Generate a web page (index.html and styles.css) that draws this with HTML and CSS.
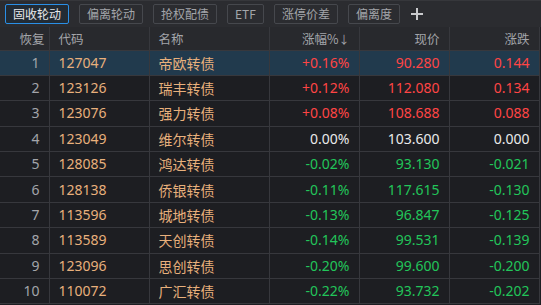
FILE: index.html
```html
<!DOCTYPE html>
<html lang="zh">
<head>
  <meta charset="UTF-8" />
  <title>固收轮动</title>
  <link rel="stylesheet" href="styles.css">
</head>
<body>
  <div class="board">
    <!-- pestañas -->
    <div class="tabs">
      <span class="tab active">固收轮动</span>
      <span class="tab">偏离轮动</span>
      <span class="tab">抢权配债</span>
      <span class="tab">ETF</span>
      <span class="tab">涨停价差</span>
      <span class="tab">偏离度</span>
      <span class="add">
        <svg width="14" height="14" viewBox="0 0 14 14"><path d="M7 1v12M1 7h12" stroke="#c9cacd" stroke-width="2"/></svg>
      </span>
    </div>

    <table class="grid">
      <colgroup>
        <col style="width:49px"><col style="width:100px"><col style="width:120px">
        <col style="width:90px"><col style="width:90px"><col style="width:90px">
      </colgroup>
      <thead>
        <tr>
          <th class="idx">恢复</th>
          <th class="left">代码</th>
          <th class="left">名称</th>
          <th>涨幅%<span class="arrow">↓</span></th>
          <th>现价</th>
          <th>涨跌</th>
        </tr>
      </thead>
      <tbody>
        <tr class="sel up"><td class="idx">1</td><td class="code">127047</td><td class="name">帝欧转债</td><td>+0.16%</td><td>90.280</td><td>0.144</td></tr>
        <tr class="up"><td class="idx">2</td><td class="code">123126</td><td class="name">瑞丰转债</td><td>+0.12%</td><td>112.080</td><td>0.134</td></tr>
        <tr class="up"><td class="idx">3</td><td class="code">123076</td><td class="name">强力转债</td><td>+0.08%</td><td>108.688</td><td>0.088</td></tr>
        <tr class="flat"><td class="idx">4</td><td class="code">123049</td><td class="name">维尔转债</td><td>0.00%</td><td>103.600</td><td>0.000</td></tr>
        <tr class="down"><td class="idx">5</td><td class="code">128085</td><td class="name">鸿达转债</td><td>-0.02%</td><td>93.130</td><td>-0.021</td></tr>
        <tr class="down"><td class="idx">6</td><td class="code">128138</td><td class="name">侨银转债</td><td>-0.11%</td><td>117.615</td><td>-0.130</td></tr>
        <tr class="down"><td class="idx">7</td><td class="code">113596</td><td class="name">城地转债</td><td>-0.13%</td><td>96.847</td><td>-0.125</td></tr>
        <tr class="down"><td class="idx">8</td><td class="code">113589</td><td class="name">天创转债</td><td>-0.14%</td><td>99.531</td><td>-0.139</td></tr>
        <tr class="down"><td class="idx">9</td><td class="code">123096</td><td class="name">思创转债</td><td>-0.20%</td><td>99.600</td><td>-0.200</td></tr>
        <tr class="down"><td class="idx">10</td><td class="code">110072</td><td class="name">广汇转债</td><td>-0.22%</td><td>93.732</td><td>-0.202</td></tr>
      </tbody>
    </table>
  </div>
</body>
</html>
```

FILE: styles.css
```css
/* colores */
:root {
  --bg: #1d1e22;
  --bar: #2b2c30;
  --head: #28292d;
  --line: #37383d;
  --sel: #213a4d;
  --muted: #a3a5aa;
  --gold: #e8b07c;
  --red: #ff4545;
  --green: #22c55a;
}
* { box-sizing: border-box; margin: 0; padding: 0; }
body {
  background: var(--bg);
  font-family: "Noto Sans", "Noto Sans CJK SC", sans-serif;
  overflow: hidden;
}

/* PESTAÑAS */
.tabs {
  display: flex;
  align-items: center;
  gap: 10px;
  height: 27px;
  padding: 0 0 0 5px;
  background: var(--bar);
  border-top: 1px solid #36373b;
}
.tab {
  height: 20px;
  line-height: 18px;
  padding: 0 7px;
  border: 1px solid #46484d;
  border-radius: 2px;
  color: var(--muted);
  font-size: 12px;
  font-family: "Noto Sans CJK SC", sans-serif;
}
.tab.active {
  border-color: #2a8fe6;
  background: #222b34;
  color: #e6e7e9;
}
.add {
  display: flex;
  margin-left: 0;
}

/* TABLA */
.grid {
  border-collapse: collapse;
  table-layout: fixed;
  width: 539px;
}
.grid th, .grid td {
  border: 1px solid var(--line);
  border-top: none;
  text-align: right;
  padding: 0 9px;
  white-space: nowrap;
}
.grid th:first-child, .grid td:first-child { border-left: none; }
.grid th {
  height: 23px;
  background: var(--head);
  color: var(--muted);
  font-weight: normal;
  font-size: 12.5px;
  font-family: "Noto Sans CJK SC", sans-serif;
}
.grid th .arrow { font-size: 11px; }
.grid th.idx { padding-right: 4px; }
.grid th.left, .grid td.code, .grid td.name { text-align: left; }
.grid td {
  height: 25.4px;
  font-size: 14px;
  line-height: 1;
}
.grid td.name { font-family: "Noto Sans CJK SC", sans-serif; }

tr.sel td { background: var(--sel); }
tr.up td { color: var(--red); }
tr.down td { color: var(--green); }
tr.flat td { color: #e9e9ea; }
tr td.idx { color: var(--muted); }
tr td.code, tr td.name { color: var(--gold); }
```
